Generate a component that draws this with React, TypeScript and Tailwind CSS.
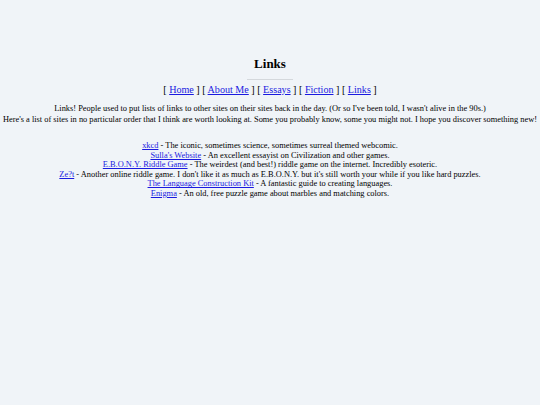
export default function App() {
  const sites = [
    { name: "xkcd", desc: "The iconic, sometimes science, sometimes surreal themed webcomic." },
    { name: "Sulla's Website", desc: "An excellent essayist on Civilization and other games." },
    { name: "E.B.O.N.Y. Riddle Game", desc: "The weirdest (and best!) riddle game on the internet. Incredibly esoteric." },
    { name: "Ze?t", desc: "Another online riddle game. I don't like it as much as E.B.O.N.Y. but it's still worth your while if you like hard puzzles." },
    { name: "The Language Construction Kit", desc: "A fantastic guide to creating languages." },
    { name: "Enigma", desc: "An old, free puzzle game about marbles and matching colors." },
  ]
  const nav = ["Home", "About Me", "Essays", "Fiction", "Links"]

  return (
    <div className="min-h-[405px] w-[540px] bg-[#f0f4f8] text-black font-['Liberation_Serif',serif] text-center pt-[55px]">
      <h1 className="text-[13px] font-bold leading-[18px]">Links</h1>
      <hr className="mx-auto mt-[6px] w-[46px] border-t border-[#d4d8dc]" />
      <div className="mt-[3px] text-[10.1px] leading-[14px]">
        {nav.map((n, i) => (
          <span key={n}>
            [ <a href="#" className="text-[#1a1ae0] underline">{n}</a> ]{i < nav.length - 1 ? " " : ""}
          </span>
        ))}
      </div>
      <div className="mt-[6px] text-[8.4px] leading-[11px] whitespace-nowrap">
        <p>Links! People used to put lists of links to other sites on their sites back in the day. (Or so I've been told, I wasn't alive in the 90s.)</p>
        <p>Here's a list of sites in no particular order that I think are worth looking at. Some you probably know, some you might not. I hope you discover something new!</p>
      </div>
      <ul className="mt-[16px] text-[8.4px] leading-[9.6px]">
        {sites.map((s) => (
          <li key={s.name}>
            <a href="#" className="text-[#1a1ae0] underline">{s.name}</a> - {s.desc}
          </li>
        ))}
      </ul>
    </div>
  )
}
